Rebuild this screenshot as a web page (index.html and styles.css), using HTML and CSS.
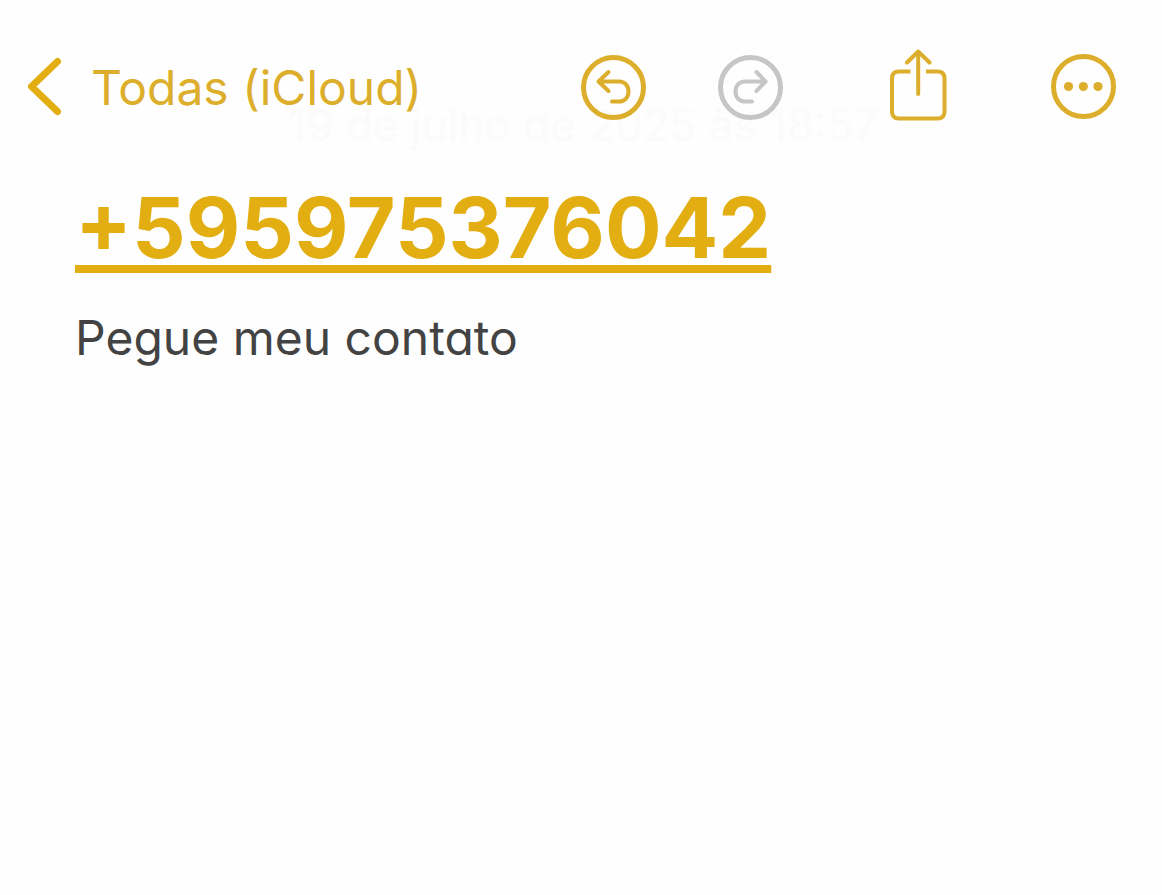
FILE: index.html
```html
<!DOCTYPE html>
<html lang="pt-BR">
<head>
<meta charset="utf-8">
<meta name="viewport" content="width=device-width, initial-scale=1">
<title>Notas</title>
<link rel="stylesheet" href="styles.css">
</head>
<body>
<header class="toolbar">
  <button class="back" type="button">
    <svg class="chevron" width="34" height="60" viewBox="0 -1 34 60" aria-hidden="true"><path d="M30.500 4.500 4.500 29.500 30.500 54.500" /></svg>
    <span class="back-label">Todas (iCloud)</span>
  </button>
  <div class="actions">
    <div class="history">
      <button class="icon-button" type="button" aria-label="Desfazer">
        <svg class="icon" width="66" height="70" viewBox="0 -3.500 66 70" aria-hidden="true">
          <circle class="ring" cx="33.500" cy="33" r="30" />
          <path d="M28.500 17.500 18.500 27 28.500 36.500M19 27H39C45 27 48.500 31.500 48.500 37S45 47 39 47H32" />
        </svg>
      </button>
      <button class="icon-button" type="button" aria-label="Refazer" disabled>
        <svg class="icon" width="66" height="70" viewBox="0 -3.500 66 70" aria-hidden="true">
          <circle class="ring" cx="33.500" cy="33" r="30" />
          <path d="M39.500 17.500 48.500 27 39.500 36.500M48 27H28C22 27 18.500 31.500 18.500 37S22 47 28 47H35" />
        </svg>
      </button>
    </div>
    <button class="icon-button" type="button" aria-label="Compartilhar">
      <svg class="icon" width="69" height="74" viewBox="0 1 69 74" aria-hidden="true">
        <path class="box" d="M28.500 23.500H17Q10 23.500 10 30.500V63.500Q10 70.500 17 70.500H55.500Q62.500 70.500 62.500 63.500V30.500Q62.500 23.500 55.500 23.500H44" />
        <path d="M36.200 46V4M25 14.500 36.200 3.500 47.500 14.500" />
      </svg>
    </button>
    <button class="icon-button" type="button" aria-label="Mais">
      <svg class="icon" width="66" height="68" viewBox="0 -2 66 68" aria-hidden="true">
        <circle class="ring" cx="33.500" cy="32.500" r="30" />
        <g class="dots"><circle cx="18.500" cy="32.500" r="4.600" /><circle cx="33.300" cy="32.500" r="4.600" /><circle cx="48" cy="32.500" r="4.600" /></g>
      </svg>
    </button>
  </div>
</header>
<main class="note">
  <time class="date" datetime="2025-07-19T18:57">19 de julho de 2025 às 18:57</time>
  <h1 class="title"><a href="tel:+595975376042">+595975376042</a></h1>
  <p class="text">Pegue meu contato</p>
</main>
</body>
</html>
```
FILE: styles.css
```css
* { box-sizing: border-box; }

body {
  margin: 0;
  background: #fefefe;
  color: #434343;
  font-family: Inter, "Liberation Sans", sans-serif;
}

button {
  padding: 0;
  border: 0;
  background: none;
  color: #dcae2b;
  font: inherit;
}

/* The toolbar floats over the scrolled note. */
.toolbar {
  position: absolute;
  top: 0;
  left: 0;
  right: 0;
  z-index: 1;
  display: flex;
  align-items: center;
  justify-content: space-between;
  padding: 49px 46px 0 27px;
}

.back {
  display: flex;
  align-items: center;
  gap: 30px;
  font-size: 48px;
  line-height: 60px;
  white-space: nowrap;
}

.back-label { padding-top: 4px; }

.chevron {
  fill: none;
  stroke: #e3ae12;
  stroke-width: 7;
  stroke-linecap: round;
  stroke-linejoin: round;
}

.actions {
  display: flex;
  align-items: center;
  gap: 99px;
}

.history {
  display: flex;
  gap: 71px;
}

.icon-button:disabled { color: #c6c6c6; }

.icon {
  display: block;
  fill: none;
  stroke: currentColor;
  stroke-width: 4;
  stroke-linecap: round;
  stroke-linejoin: round;
}

.ring { stroke-width: 5; }

.box {
  stroke-width: 4;
  stroke-linecap: butt;
}

.dots {
  fill: currentColor;
  stroke: none;
}

.note {
  padding: 98px 70px 0 75px;
}

.date {
  display: block;
  color: #fbfbfb;
  font-size: 44px;
  line-height: 54px;
  text-align: center;
}

.title {
  margin: 26px 0 0;
  font-size: 84px;
  font-weight: 700;
  line-height: 100px;
}

.title a {
  color: #e3ae12;
  text-decoration: underline;
  text-decoration-thickness: 8px;
  text-underline-offset: 7px;
  text-decoration-skip-ink: none;
}

.text {
  margin: 30px 0 0;
  font-size: 48px;
  line-height: 60px;
  font-feature-settings: "cv11";
}
```
